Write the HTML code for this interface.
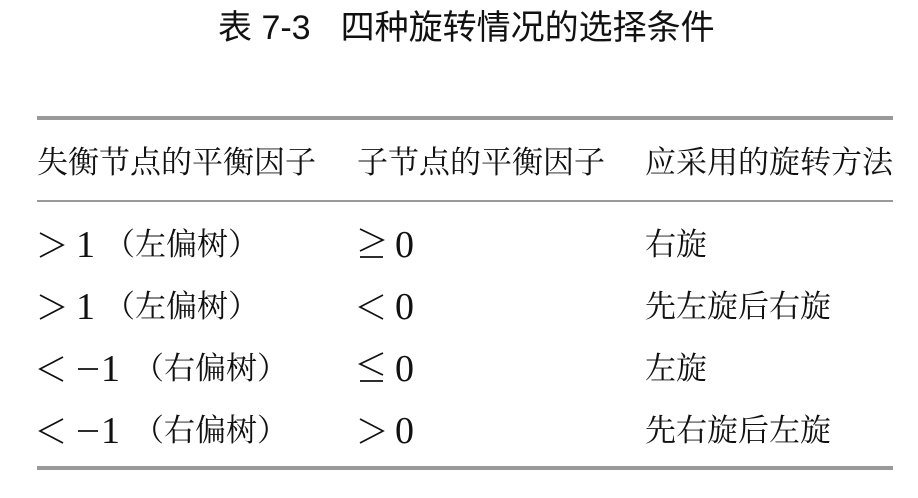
<!DOCTYPE html>
<html><head><meta charset="utf-8"><style>
body{margin:0;width:918px;height:498px;background:#fff;position:relative;overflow:hidden;font-family:"Liberation Serif","Noto Serif CJK SC",serif;color:#111}
.t{position:absolute;font-size:31px;line-height:36px;white-space:pre}
.d{position:absolute;font-size:38px;line-height:36px;font-family:"Liberation Serif",serif}
.r{position:absolute;left:37px;width:856px;background:#999}
.h{position:absolute;left:218px;top:8px;font-family:"Liberation Sans","Noto Sans CJK SC",sans-serif;font-size:34px;line-height:40px;white-space:pre}
svg{position:absolute;left:0;top:0}
</style></head><body>
<div class="h">表 7-3<span style="display:inline-block;width:30px"></span>四种旋转情况的选择条件</div>
<div class="r" style="top:116px;height:4px"></div>
<div class="t" style="left:37px;top:145px">失衡节点的平衡因子</div>
<div class="t" style="left:357px;top:145px">子节点的平衡因子</div>
<div class="t" style="left:645px;top:145px">应采用的旋转方法</div>
<div class="r" style="top:200px;height:2px"></div>

<svg width="918" height="498" fill="none" stroke="#111" stroke-width="1.7">
<polyline points="40,233 63,245 40,257"/>
<polyline points="360,229 383,240 360,251"/><line x1="360" y1="257" x2="383" y2="257"/>
<polyline points="40,295 63,307 40,319"/>
<polyline points="383,295 360,307 383,319"/>
<polyline points="63,357 40,369 63,381"/><line x1="78" y1="369" x2="98" y2="369"/>
<polyline points="383,353 360,364 383,375"/><line x1="360" y1="381" x2="383" y2="381"/>
<polyline points="63,419 40,431 63,443"/><line x1="78" y1="431" x2="98" y2="431"/>
<polyline points="360,419 383,431 360,443"/>
</svg>
<div class="d" style="left:76px;top:227px">1</div>
<div class="t" style="left:104px;top:227px">（左偏树）</div>
<div class="d" style="left:395px;top:227px">0</div>
<div class="t" style="left:645px;top:227px">右旋</div>

<div class="d" style="left:76px;top:289px">1</div>
<div class="t" style="left:104px;top:289px">（左偏树）</div>
<div class="d" style="left:395px;top:289px">0</div>
<div class="t" style="left:645px;top:289px">先左旋后右旋</div>

<div class="d" style="left:101px;top:351px">1</div>
<div class="t" style="left:133px;top:351px">（右偏树）</div>
<div class="d" style="left:395px;top:351px">0</div>
<div class="t" style="left:645px;top:351px">左旋</div>

<div class="d" style="left:101px;top:413px">1</div>
<div class="t" style="left:133px;top:413px">（右偏树）</div>
<div class="d" style="left:395px;top:413px">0</div>
<div class="t" style="left:645px;top:413px">先右旋后左旋</div>
<div class="r" style="top:466px;height:4px"></div>
</body></html>
